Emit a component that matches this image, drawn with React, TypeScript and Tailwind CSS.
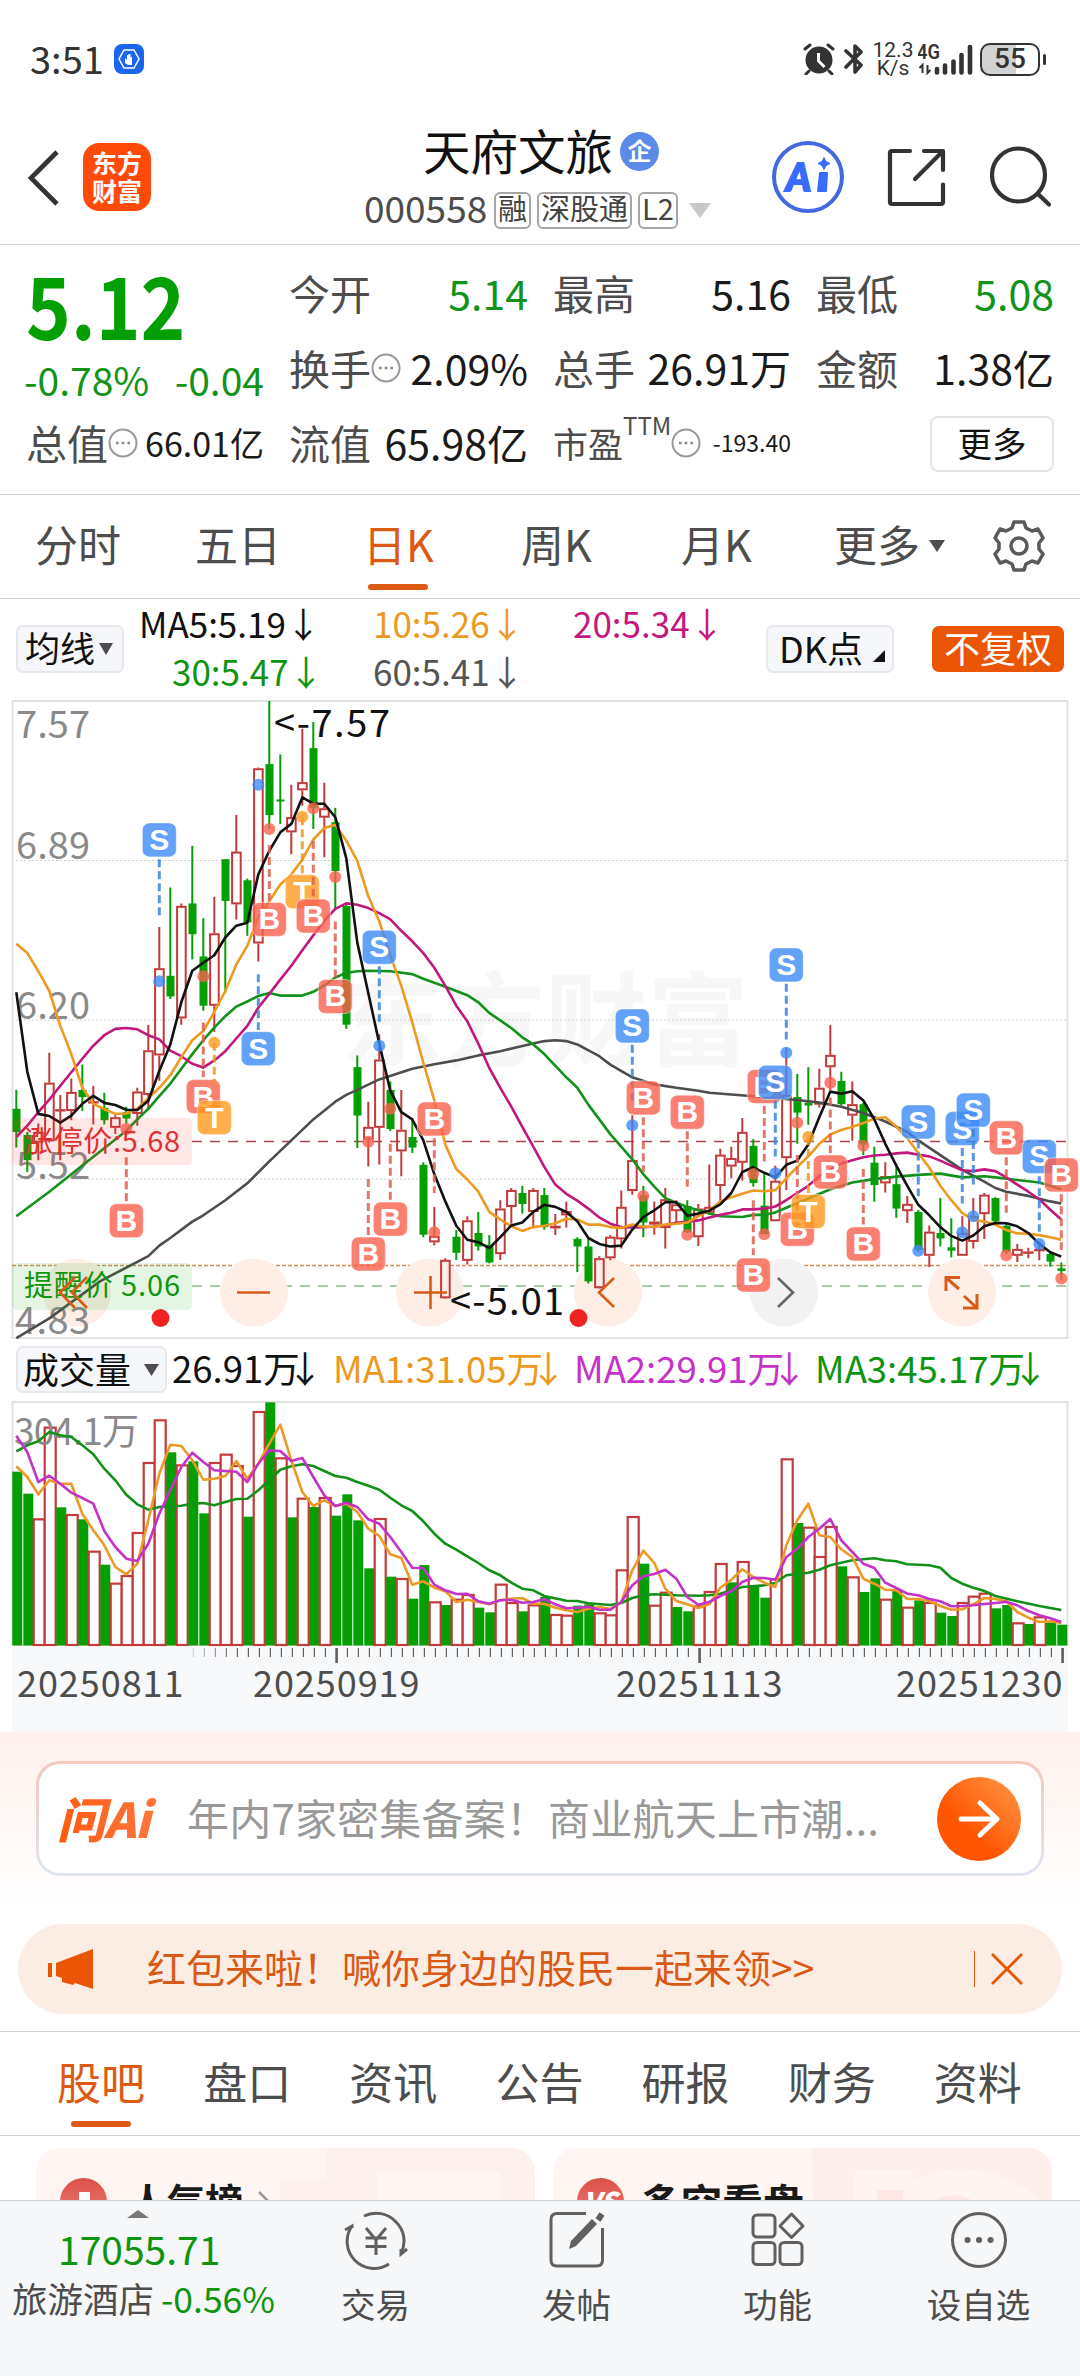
import type { ReactNode } from "react";

type Side = "S" | "B" | "T";

// Candle rows: up/down flag, high, body top, body bottom, low (chart units, top = 26)
const candles: [number, number, number, number, number][] = [
  [0, 950, 995, 1050, 1087], [0, 1050, 1057, 1117, 1145], [1, 1030, 1050, 1075, 1117], [1, 862, 933, 1072, 1075],
  [1, 962, 996, 1000, 1117], [1, 923, 955, 1000, 1022], [0, 890, 950, 967, 1000], [1, 940, 977, 979, 1032],
  [0, 957, 993, 1022, 1032], [1, 1010, 1015, 1040, 1055], [0, 990, 1003, 1018, 1030], [1, 945, 954, 1007, 1035],
  [1, 796, 856, 962, 998], [1, 563, 661, 868, 928], [0, 469, 679, 728, 734], [1, 507, 513, 780, 795],
  [0, 370, 507, 580, 640], [0, 542, 633, 750, 762], [1, 491, 578, 750, 812], [0, 402, 402, 501, 720],
  [1, 297, 384, 509, 545], [0, 448, 452, 552, 584], [1, 184, 186, 602, 645], [0, 26, 176, 297, 330],
  [0, 153, 260, 264, 318], [1, 225, 302, 338, 390], [1, 92, 219, 238, 275], [0, 76, 138, 280, 330],
  [1, 220, 281, 303, 397], [0, 280, 314, 430, 520], [0, 505, 513, 795, 805], [0, 868, 896, 1011, 1088],
  [1, 978, 1038, 1068, 1132], [1, 818, 878, 1040, 1127], [0, 930, 950, 1043, 1048], [1, 950, 1045, 1096, 1155],
  [0, 1018, 1062, 1087, 1100], [0, 1122, 1128, 1294, 1300], [1, 1228, 1297, 1312, 1320], [1, 1350, 1354, 1445, 1446],
  [0, 1283, 1299, 1337, 1354], [1, 1250, 1260, 1356, 1365], [0, 1240, 1290, 1322, 1332], [0, 1295, 1318, 1360, 1362],
  [1, 1212, 1232, 1340, 1354], [1, 1183, 1188, 1228, 1268], [0, 1178, 1195, 1221, 1244], [1, 1183, 1188, 1240, 1275],
  [0, 1183, 1200, 1276, 1282], [1, 1245, 1273, 1279, 1295], [1, 1216, 1238, 1248, 1277], [0, 1300, 1304, 1322, 1383],
  [0, 1302, 1322, 1405, 1410], [1, 1345, 1350, 1421, 1422], [1, 1295, 1299, 1350, 1355], [1, 1189, 1228, 1305, 1327],
  [1, 1010, 1117, 1190, 1199], [0, 1178, 1200, 1265, 1300], [1, 1215, 1263, 1270, 1294], [1, 1183, 1210, 1278, 1327],
  [1, 1212, 1222, 1238, 1270], [0, 1212, 1226, 1288, 1290], [1, 1221, 1232, 1300, 1321], [1, 1127, 1228, 1242, 1246],
  [1, 1090, 1104, 1178, 1220], [1, 1085, 1112, 1132, 1160], [1, 1017, 1050, 1123, 1166], [0, 1067, 1083, 1171, 1180],
  [0, 1148, 1225, 1293, 1293], [1, 1130, 1166, 1262, 1262], [1, 850, 962, 1112, 1188], [0, 912, 967, 1004, 1078],
  [0, 896, 980, 987, 1033], [1, 900, 945, 985, 992], [1, 796, 867, 896, 950], [0, 907, 929, 984, 987],
  [1, 930, 984, 1011, 1071], [0, 980, 984, 1080, 1105], [0, 1085, 1123, 1176, 1216], [1, 1122, 1155, 1172, 1194],
  [0, 1125, 1174, 1232, 1254], [1, 1202, 1221, 1238, 1266], [0, 1235, 1240, 1330, 1335], [1, 1272, 1287, 1344, 1371],
  [0, 1207, 1290, 1303, 1322], [0, 1255, 1324, 1332, 1348], [1, 1250, 1290, 1344, 1344], [1, 1207, 1250, 1311, 1327],
  [1, 1195, 1199, 1245, 1304], [0, 1205, 1207, 1262, 1266], [0, 1268, 1273, 1335, 1340], [1, 1316, 1328, 1344, 1359],
  [1, 1325, 1334, 1337, 1350], [1, 1310, 1328, 1331, 1355], [0, 1335, 1340, 1358, 1370], [0, 1360, 1374, 1380, 1402],
];

const ma5 = [
  718, 907, 1007, 1012, 1028, 1011, 983, 964, 981, 986, 997, 998, 976, 905, 842, 742, 667, 648, 630, 588, 560, 553, 438,
  382, 338, 318, 255, 270, 270, 302, 400, 600, 720, 840, 952, 1003, 1020, 1070, 1150, 1215, 1273, 1306, 1312, 1326, 1300,
  1272, 1265, 1240, 1223, 1228, 1240, 1262, 1302, 1316, 1322, 1320, 1282, 1252, 1236, 1217, 1217, 1249, 1244, 1237, 1222,
  1195, 1145, 1134, 1147, 1158, 1128, 1118, 1080, 1015, 954, 959, 953, 975, 1020, 1078, 1130, 1178, 1223, 1248, 1276,
  1297, 1308, 1296, 1274, 1266, 1267, 1274, 1290, 1316, 1336, 1346,
];
const ma10 = [
  603, 625, 668, 715, 798, 865, 945, 983, 996, 1007, 1006, 995, 970, 945, 915, 872, 832, 810, 765, 715, 652, 608, 540,
  502, 462, 438, 403, 355, 328, 320, 358, 406, 490, 550, 630, 703, 790, 885, 975, 1080, 1138, 1163, 1192, 1240, 1258,
  1274, 1285, 1276, 1273, 1267, 1256, 1258, 1270, 1270, 1276, 1278, 1270, 1275, 1275, 1270, 1268, 1265, 1250, 1237, 1215,
  1205, 1197, 1189, 1191, 1188, 1160, 1133, 1108, 1078, 1056, 1045, 1038, 1029, 1018, 1015, 1037, 1065, 1100, 1135, 1178,
  1212, 1243, 1258, 1263, 1270, 1283, 1291, 1292, 1295, 1300, 1306,
];
const ma20 = [
  1062, 1035, 1003, 973, 940, 908, 876, 845, 820, 805, 803, 806, 820, 830, 857, 870, 888, 897, 880, 858, 828, 798, 755,
  722, 688, 655, 618, 583, 548, 520, 507, 510, 518, 530, 545, 572, 597, 625, 660, 703, 750, 787, 840, 898, 945, 990, 1038,
  1085, 1133, 1175, 1197, 1213, 1232, 1253, 1268, 1276, 1277, 1276, 1275, 1271, 1266, 1263, 1260, 1253, 1247, 1242, 1234,
  1234, 1232, 1227, 1212, 1195, 1178, 1155, 1140, 1125, 1117, 1110, 1106, 1104, 1101, 1099, 1104, 1108, 1118, 1130, 1141,
  1143, 1139, 1143, 1158, 1175, 1192, 1210, 1235, 1258,
];
// Slow averages are sampled: [day, value]
const ma30: [number, number][] = [
  [0, 1250], [3, 1192], [6, 1130], [9, 1068], [10, 1047], [11, 1020], [12, 995], [13, 965], [14, 935], [15, 900],
  [16, 865], [17, 832], [18, 802], [19, 775], [20, 752], [21, 740], [22, 727], [23, 720], [24, 726], [26, 726], [27, 717],
  [28, 702], [29, 683], [30, 672], [31, 668], [32, 667], [34, 668], [36, 675], [37, 686], [39, 705], [41, 725], [42, 742],
  [43, 767], [45, 803], [46, 825], [47, 842], [48, 865], [50, 920], [51, 945], [52, 985], [53, 1020], [54, 1055],
  [56, 1115], [57, 1150], [58, 1180], [59, 1207], [60, 1218], [61, 1228], [62, 1236], [63, 1244], [64, 1250], [66, 1252],
  [67, 1247], [68, 1247], [69, 1241], [70, 1230], [72, 1208], [74, 1186], [76, 1170], [78, 1162], [80, 1156], [82, 1152],
  [84, 1149], [86, 1158], [88, 1155], [89, 1158], [91, 1164], [93, 1170], [95, 1186],
];
const ma60: [number, number][] = [
  [0, 1540], [3, 1493], [7.6, 1405], [12, 1345], [13, 1320], [14, 1302], [16, 1263], [17, 1248], [19, 1212], [21, 1172],
  [23, 1120], [25, 1070], [27, 1020], [29, 978], [30, 962], [31, 950], [33, 925], [36, 900], [38, 889], [40, 880],
  [42, 868], [44, 858], [46, 846], [48, 834], [49, 832], [50, 834], [51, 842], [53, 870], [54, 890], [56, 920], [58, 937],
  [60, 945], [62, 952], [63, 957], [65, 961], [67, 965], [69, 970], [71, 974], [73, 980], [75, 990], [77, 1005],
  [79, 1025], [81, 1050], [82, 1070], [84, 1105], [86, 1140], [88, 1168], [89, 1183], [90, 1192], [92, 1202], [94, 1215],
  [95, 1220],
];

// Trade marks: side, day, badge centre, dash start, dash end, dot
const marks: [Side, number, number, number, number, number][] = [
  ["S", 13, 356, 402, 535, 692], ["B", 10, 1261, 1110, 1215, 1043], ["B", 17, 966, 790, 920, 680],
  ["T", 18, 1016, 838, 940, 838], ["S", 22, 852, 675, 808, 225], ["T", 26, 479, 302, 435, 301],
  ["B", 23, 545, 368, 500, 330], ["B", 27, 537, 358, 490, 281], ["B", 29, 728, 550, 683, 444],
  ["B", 32, 1340, 1162, 1295, 1073], ["S", 33, 611, 656, 788, 845], ["B", 34, 1257, 1078, 1212, 995],
  ["B", 38, 1019, 1065, 1195, 1288], ["S", 56, 798, 843, 975, 1034], ["B", 57, 969, 1015, 1145, 1202],
  ["B", 61, 1003, 1048, 1180, 1294], ["B", 67, 1390, 1212, 1343, 1150], ["B", 68, 942, 988, 1120, 1293],
  ["S", 69, 932, 976, 1108, 1148], ["S", 70, 653, 698, 830, 862], ["B", 71, 1281, 1105, 1237, 1028],
  ["T", 72, 1239, 1062, 1195, 1062], ["B", 74, 1145, 968, 1100, 933], ["B", 77, 1316, 1138, 1270, 1083],
  ["S", 82, 1026, 1070, 1203, 1332], ["S", 86, 1042, 1088, 1220, 1288], ["S", 87, 998, 1043, 1175, 1250],
  ["B", 90, 1064, 1110, 1242, 1343], ["S", 93, 1108, 1155, 1287, 1316], ["B", 95, 1152, 1198, 1330, 1398],
];

// Negative = up day, drawn hollow
const volumes = [
  424, 490, -564, -289, 531, -551, 567, -661, 703, -757, -734, -605, -395, -267, 366, -402, 393, 549, -395, -370, -404,
  559, -242, 216, -381, 561, -502, 530, -500, 556, 492, 570, 714, -563, 739, -743, 805, 704, -813, 824, -805, -791, 832,
  846, -760, -815, 843, -822, 800, -851, -853, 826, 822, -846, -852, -717, -557, 700, -823, -784, 830, 843, -825, -782,
  -698, 756, -692, 765, 802, -743, -384, 578, -589, -677, -587, 708, -738, 785, 744, -805, 782, -829, 810, -815, 847, 857,
  -815, -796, -787, 834, 824, -876, 881, -858, 876, 883,
];
const vol1 = [
  408, 440, 492, 450, 460, 460, 550, 600, 645, 710, 732, 700, 570, 430, 343, 347, 390, 448, 445, 437, 392, 445, 400, 340,
  283, 390, 485, 527, 510, 527, 520, 545, 595, 617, 672, 683, 763, 753, 772, 783, 815, 808, 815, 822, 810, 805, 803, 820,
  820, 832, 840, 845, 835, 830, 836, 815, 720, 661, 698, 775, 812, 822, 833, 822, 772, 748, 717, 740, 757, 770, 645, 570,
  520, 615, 620, 657, 680, 745, 760, 778, 780, 806, 806, 812, 827, 838, 837, 822, 803, 806, 813, 845, 862, 875, 873, 878,
];
const vol2 = [
  316, 365, 455, 436, 460, 487, 503, 520, 602, 650, 685, 692, 640, 550, 480, 410, 367, 395, 420, 422, 424, 455, 400, 360,
  362, 392, 383, 440, 495, 527, 517, 530, 567, 580, 620, 665, 712, 713, 763, 780, 791, 790, 813, 820, 810, 808, 817, 815,
  807, 822, 834, 832, 829, 838, 838, 815, 765, 738, 731, 718, 745, 800, 823, 815, 797, 783, 755, 742, 743, 748, 680, 655,
  620, 595, 566, 630, 665, 700, 713, 757, 773, 790, 795, 806, 813, 828, 827, 825, 821, 818, 814, 825, 842, 855, 864, 875,
];
const vol3: [number, number][] = [
  [0, 363], [1, 345], [2, 333], [3, 305], [4, 315], [5, 320], [6, 345], [7, 372], [8, 415], [9, 450], [10, 493],
  [11, 522], [12, 538], [13, 530], [15, 526], [16, 520], [17, 518], [18, 525], [19, 515], [20, 506], [21, 505], [22, 480],
  [23, 450], [24, 418], [25, 408], [26, 402], [27, 407], [28, 422], [29, 437], [30, 442], [31, 455], [32, 466], [33, 478],
  [34, 502], [35, 525], [36, 542], [37, 573], [38, 610], [39, 640], [40, 658], [41, 678], [42, 698], [43, 720], [44, 735],
  [45, 757], [46, 775], [47, 780], [48, 797], [50, 811], [51, 812], [52, 819], [54, 824], [55, 818], [56, 803], [57, 795],
  [58, 792], [60, 795], [62, 796], [63, 795], [64, 790], [65, 780], [66, 770], [68, 765], [69, 758], [70, 735], [72, 727],
  [73, 718], [74, 705], [76, 690], [78, 684], [79, 690], [80, 693], [81, 702], [83, 705], [84, 712], [85, 743], [86, 760],
  [87, 772], [88, 782], [89, 797], [91, 813], [93, 827], [95, 839],
];

const RED = "#c23a3a";
const GREEN = "#049f04";

const dayX = (i: number) => 16.3 + i * 11;
const priceY = (v: number) => (v - 26) / 2.376 + 2;
const volY = (v: number) => (v - 215) / 3 + 1;

const line = (data: (number | [number, number])[], y: (v: number) => number) =>
  data
    .map((d, i) => (Array.isArray(d) ? `${dayX(d[0])},${y(d[1]).toFixed(1)}` : `${dayX(i)},${y(d).toFixed(1)}`))
    .join(" ");

const markFill: Record<Side, string> = { S: "#3d8bf7", B: "#f9604f", T: "#ff9a1f" };
const markLine: Record<Side, string> = { S: "#3a85de", B: "#e0604f", T: "#f0971e" };

function PriceChart() {
  return (
    <svg width="1080" height="642" viewBox="0 0 1080 642" className="block">
      <text x="341" y="359" fontSize="102" fontWeight="700" fill="#f7f7f7">
        东方财富
      </text>
      <path d="M12 161.5H1067M12 321H1067M12 480H1067" stroke="#cfcfcf" strokeDasharray="2 2" />
      <rect x="12.5" y="2" width="1055" height="637" fill="none" stroke="#e2e2e2" strokeWidth="2" />
      <path d="M192 442.5H1067" stroke="#a8434c" strokeWidth="1.6" strokeDasharray="10 8" />
      <path d="M12 566.5H1067" stroke="#d98a58" strokeWidth="1.6" strokeDasharray="4 2" />
      <path d="M192 587H1067" stroke="#86c186" strokeWidth="1.6" strokeDasharray="10 8" />
      {[77, 254, 430, 608, 784, 962].map((x, i) => (
        <circle key={x} cx={x} cy="593.5" r="34" fill={i === 4 ? "#f2f2f2" : "#feeee6"} />
      ))}

      <g fontSize="38" fill="#8a8a8a">
        <text x="16" y="39" textLength="74">7.57</text>
        <text x="16" y="160" textLength="74">6.89</text>
        <text x="16" y="320" textLength="74">6.20</text>
        <text x="16" y="480" textLength="74">5.52</text>
        <text x="15" y="635" textLength="75">4.83</text>
      </g>

      {candles.map(([up, high, top, bottom, low], i) => {
        const x = dayX(i);
        const h = (bottom - top) / 2.376;
        return up ? (
          <g key={i} stroke={RED} strokeWidth="2" fill="none">
            <path d={`M${x} ${priceY(high)}V${priceY(top)}M${x} ${priceY(bottom)}V${priceY(low)}`} />
            <rect x={x - 4.2} y={priceY(top) + 0.9} width="8.6" height={Math.max(h - 1.8, 0.4)} />
          </g>
        ) : (
          <g key={i} fill={GREEN}>
            <rect x={x - 1} y={priceY(high)} width="2" height={(low - high) / 2.376} />
            <rect x={x - 3.8} y={priceY(top)} width="8" height={Math.max(h, 2)} />
          </g>
        );
      })}

      <g fill="none" strokeWidth="2.6" strokeLinejoin="round">
        <polyline points={line(ma60, priceY)} stroke="#4d4d4d" />
        <polyline points={line(ma30, priceY)} stroke="#12921a" />
        <polyline points={line(ma20, priceY)} stroke="#c0187c" />
        <polyline points={line(ma10, priceY)} stroke="#ee991f" />
        <polyline points={line(ma5, priceY)} stroke="#111" />
      </g>

      {marks.map(([side, day, badge, from, to, dot]) => {
        const x = dayX(day);
        return (
          <g key={`${side}${day}`}>
            <path
              d={`M${x} ${priceY(from)}V${priceY(to)}`}
              stroke={markLine[side]}
              strokeWidth="3"
              strokeDasharray="8 4"
              opacity="0.85"
            />
            <circle cx={x} cy={priceY(dot)} r="6" fill={markFill[side]} opacity="0.8" />
            <rect
              x={x - 17}
              y={priceY(badge) - 17}
              width="34"
              height="34"
              rx="7"
              fill={markFill[side]}
              fillOpacity="0.8"
              stroke="#fff"
              strokeOpacity="0.5"
            />
            <text
              x={x}
              y={priceY(badge) + 10}
              textAnchor="middle"
              fontFamily="Liberation Sans, sans-serif"
              fontSize="30"
              fontWeight="700"
              fill="#fff"
            >
              {side}
            </text>
          </g>
        );
      })}

      <rect x="12" y="419" width="180" height="47" rx="5" fill="#ff3b30" fillOpacity="0.12" />
      <text x="24" y="453" fontSize="29" textLength="156" fill="#e03030">涨停价:5.68</text>
      <rect x="12" y="564" width="180" height="47" rx="5" fill="#1faa1f" fillOpacity="0.12" />
      <text x="24" y="597" fontSize="29" textLength="156" fill="#0f960f">提醒价 5.06</text>

      <g fontSize="38" fill="#111">
        <text x="274" y="38" textLength="116">&lt;-7.57</text>
        <text x="450" y="616" textLength="114">&lt;-5.01</text>
      </g>
      <circle cx="160.5" cy="619" r="9" fill="#f02222" />
      <circle cx="578.5" cy="619" r="9" fill="#f02222" />

      <g fill="none" stroke="#d95b18" strokeWidth="2.6">
        <path d="M75 578L60 593.5L75 609M87 578L72 593.5L87 609" />
        <path d="M237 593.5H270M414 593.5H447M430.5 577V610" />
        <path d="M614 579L599 593.5L614 608" />
        <path d="M778 579L793 593.5L778 608" stroke="#666" />
        <path d="M946 592V578.500H960M947 579.500L959 590M963 609H977V595M976 608L964 597" strokeWidth="3" />
      </g>
    </svg>
  );
}

function VolumeChart() {
  return (
    <svg width="1080" height="247" viewBox="0 0 1080 247" className="block">
      <rect x="12.5" y="1" width="1055" height="243" fill="none" stroke="#e2e2e2" strokeWidth="2" />
      {volumes.map((v, i) => {
        const y = volY(Math.abs(v));
        return v < 0 ? (
          <rect
            key={i}
            x={dayX(i) - 4.6}
            y={y + 1}
            width="11"
            height={243 - y}
            fill="#fff"
            stroke={RED}
            strokeWidth="2.2"
          />
        ) : (
          <rect key={i} x={dayX(i) - 4} y={y} width="10" height={244.5 - y} fill={GREEN} />
        );
      })}
      <text x="14" y="44" fontSize="37" textLength="125" fill="#8a8a8a">304.1万</text>
      <g fill="none" strokeWidth="2.6" strokeLinejoin="round">
        <polyline points={line(vol3, volY)} stroke="#12901a" />
        <polyline points={line(vol1, volY)} stroke="#ec9a25" />
        <polyline points={line(vol2, volY)} stroke="#c432c8" />
      </g>
    </svg>
  );
}

function Ticks() {
  return (
    <svg width="1056" height="16" viewBox="12 0 1056 16" className="block">
      {Array.from({ length: 80 }, (_, n) => {
        const i = n + 16;
        const major = i === 29 || i === 62 || i === 95;
        return (
          <rect
            key={i}
            x={dayX(i) + (major ? 0 : 0.5)}
            width={major ? 2.6 : 1.2}
            height={major ? 15 : 9}
            fill="#5f5f5f"
            opacity={Math.min(1, 0.25 + n * 0.18)}
          />
        );
      })}
    </svg>
  );
}

function InfoDot() {
  return (
    <svg width="30" height="30" viewBox="0 0 30 30" className="shrink-0">
      <circle cx="15" cy="15" r="13.500" fill="none" stroke="#999" strokeWidth="2" />
      <path d="M8 15h2.600M13.700 15h2.600M19.400 15h2.600" stroke="#888" strokeWidth="2.600" />
    </svg>
  );
}

function Stat({ label, value, info, color = "text-[#1a1a1a]" }: { label: string; value: string; info?: boolean; color?: string }) {
  return (
    <div className="flex h-[75px] items-center justify-between">
      <span className="flex items-center text-[41px] text-[#4d4d4d]">
        {label}
        {info ? <InfoDot /> : null}
      </span>
      <span className={`text-[41px] ${color}`}>{value}</span>
    </div>
  );
}

function Tag({ children }: { children: ReactNode }) {
  return (
    <span className="flex h-[37px] items-center rounded-[6px] border-2 border-[#a6a6a6] px-[2px] pb-1 text-[29px] text-[#444]">
      {children}
    </span>
  );
}

function StatusBar() {
  return (
    <div className="flex h-[118px] items-center pl-[30px] pr-[34px]">
      <span className="w-[84px] pb-1 text-[38px] text-[#333]">3:51</span>
      <svg width="30" height="30" viewBox="0 0 30 30">
        <rect width="30" height="30" rx="8" fill="#1a66f0" />
        <path d="M10 6h10l5 9-5 9H10l-5-9z" fill="none" stroke="#fff" strokeWidth="1.500" />
        <path d="M11 14v5l3 2h4v-8h-1.500v3-6H14.500v6-5H13v5z" fill="#fff" />
      </svg>
      <div className="ml-auto flex items-center">
        <svg width="32" height="32" viewBox="0 0 32 32" className="mr-[9px]">
          <circle cx="16" cy="17" r="13.500" fill="#333" />
          <path d="M2 6l5-4M30 6l-5-4M6 28l-3 3M26 28l3 3" stroke="#333" strokeWidth="3" strokeLinecap="round" />
          <path d="M15.500 10v8l6 6" stroke="#fff" strokeWidth="3" fill="none" />
        </svg>
        <svg width="20" height="32" viewBox="0 0 20 32" className="mr-[6px]">
          <path
            d="M2 8l15 14-6 7V3l6 6L2 24"
            fill="none"
            stroke="#333"
            strokeWidth="3.600"
            strokeLinejoin="round"
            strokeLinecap="round"
          />
        </svg>
        <div className="w-[46px] whitespace-nowrap text-center font-[Roboto,sans-serif] text-[21px] leading-[18px] text-[#333]">
          <div>12.3</div>
          <div>K/s</div>
        </div>
        <svg width="56" height="34" viewBox="0 0 56 34" className="ml-[2px]">
          <text x="-1" y="17" fontFamily="Roboto, sans-serif" fontSize="20" fontWeight="600" textLength="23" lengthAdjust="spacingAndGlyphs" fill="#333">
            4G
          </text>
          <path d="M4.500 31V23l-3 3M9.500 23v8l3-3" stroke="#333" strokeWidth="2" fill="none" />
          <path d="M19 27v3.500M27 23.500v7M35.500 19.500v11M43.500 13v17.500M52 5v25.500" stroke="#333" strokeWidth="4.600" strokeLinecap="round" />
        </svg>
        <div className="ml-[6px] flex h-[33px] w-[60px] items-center justify-center rounded-[10px] border-2 border-[#333] bg-linear-to-r from-[#d2d2d2] from-60% to-white to-60% font-[Roboto,sans-serif] text-[28px] font-medium text-[#333]">
          55
        </div>
        <div className="ml-[3px] h-[11px] w-[3px] rounded bg-[#333]" />
      </div>
    </div>
  );
}

function Header() {
  return (
    <header className="flex h-[127px] border-b border-[#d4d4d4]">
      <div className="flex w-[364px] pl-[26px] pt-[25px]">
        <svg width="36" height="70" viewBox="0 0 36 70">
          <path d="M31 9L5 35L31 61" fill="none" stroke="#333" strokeWidth="4.600" />
        </svg>
        <div className="ml-[21px] flex h-[68px] w-[68px] items-center justify-center rounded-[16px] bg-[#ff4a0a] pb-[3px] text-center text-[25px] font-bold leading-[28px] text-white">
          东方
          <br />
          财富
        </div>
      </div>
      <div className="w-[360px]">
        <div className="ml-[59px] flex h-[66px] items-center">
          <span className="pb-[3px] text-[47.500px] leading-[60px] text-[#111]">天府文旅</span>
          <span className="ml-[7px] flex h-[39px] w-[39px] items-center justify-center rounded-full bg-[#5b8be6] pb-[3px] text-[24px] font-bold text-white">
            企
          </span>
        </div>
        <div className="mt-[2px] flex h-[48px] items-center gap-[6px]">
          <span className="w-[124px] pb-1 text-[37px] text-[#4d4d4d]">000558</span>
          <Tag>融</Tag>
          <Tag>深股通</Tag>
          <Tag>L2</Tag>
          <svg width="22" height="15" viewBox="0 0 22 15" className="ml-[5px]">
            <path d="M0 0h22L11 15z" fill="#c8c8c8" />
          </svg>
        </div>
      </div>
      <svg width="310" height="80" viewBox="0 0 310 80" className="ml-[46px] mt-[19px]">
        <circle cx="38" cy="40" r="34" fill="none" stroke="#4368e0" strokeWidth="4" />
        <text x="16" y="54" fontFamily="Lato, sans-serif" fontSize="38" fontWeight="900" fontStyle="italic" fill="#3a6bff" stroke="#3a6bff" strokeWidth="2">
          A
        </text>
        <path d="M50 36h7l-1 18h-8z" fill="#3a6bff" stroke="#3a6bff" strokeWidth="2" strokeLinejoin="round" />
        <path d="M54 20.500l2 4 4 2-4 2-2 4-2-4-4-2 4-2z" fill="#3a6bff" stroke="#3a6bff" />
        <g fill="none" stroke="#333" strokeWidth="4.200" strokeLinecap="round" strokeLinejoin="round">
          <path d="M140 14H122q-2 0-2 2V65q0 2 2 2H171q2 0 2-2V47.500M154 14H173V33M172 15L145 42" />
          <circle cx="248.500" cy="38" r="26.500" />
          <path d="M268 57L279 67.500" />
        </g>
      </svg>
    </header>
  );
}

function Quote() {
  return (
    <section className="flex h-[250px] gap-x-[25px] whitespace-nowrap border-b border-[#d4d4d4] pl-[26px] pt-[10px] leading-none">
      <div className="w-[238px]">
        <div className="h-[98px] w-[180px] origin-left scale-x-[0.885] text-[86px] font-bold leading-[96px] text-[#049f04]">
          5.12
        </div>
        <div className="ml-[-2px] flex h-[52px] items-center justify-between text-[39px] text-[#12931a]">
          <span>-0.78%</span>
          <span>-0.04</span>
        </div>
        <div className="flex h-[75px] items-center justify-between">
          <span className="flex items-center text-[41px] text-[#4d4d4d]">
            总值
            <InfoDot />
          </span>
          <span className="text-[34px] text-[#1a1a1a]">66.01亿</span>
        </div>
      </div>
      <div className="w-[239px]">
        <Stat label="今开" value="5.14" color="text-[#12931a]" />
        <Stat label="换手" value="2.09%" info />
        <Stat label="流值" value="65.98亿" />
      </div>
      <div className="w-[238px]">
        <Stat label="最高" value="5.16" />
        <Stat label="总手" value="26.91万" />
        <div className="flex h-[75px] items-center text-[#4d4d4d]">
          <span className="text-[35px]">市盈</span>
          <span className="mb-[36px] text-[24px]">TTM</span>
          <InfoDot />
          <span className="ml-auto text-[23px] text-[#1a1a1a]">-193.40</span>
        </div>
      </div>
      <div className="w-[238px]">
        <Stat label="最低" value="5.08" color="text-[#12931a]" />
        <Stat label="金额" value="1.38亿" />
        <div className="ml-auto mt-[11px] flex h-[56px] w-[124px] items-center justify-center rounded-[8px] border-2 border-[#e4e4e4] pb-1 text-[34.500px] text-[#111]">
          更多
        </div>
      </div>
    </section>
  );
}

function PeriodTabs() {
  return (
    <nav className="flex h-[104px] whitespace-nowrap border-b border-[#d4d4d4] pl-[35px] text-[43px] leading-[96px] text-[#4d4d4d]">
      <span className="w-[160px]">分时</span>
      <span className="w-[168px]">五日</span>
      <span className="relative w-[158px] text-[#dd5a14]">
        日K
        <span className="absolute bottom-[8px] left-[5px] h-[6px] w-[60px] rounded bg-[#dd5a14]" />
      </span>
      <span className="w-[160px]">周K</span>
      <span className="w-[153px]">月K</span>
      <span>更多</span>
      <svg width="16" height="12" viewBox="0 0 16 12" className="ml-[9px] mt-[45px]">
        <path d="M0 0h16L8 12z" fill="#4d4d4d" />
      </svg>
      <svg width="56" height="56" viewBox="-28 -28 56 56" className="ml-[46px] mt-[23px]">
        <path
          d="M-5 -24H5L7 -18L13 -15L19 -17L24 -8L20 -3V3L24 8L19 17L13 15L7 18L5 24H-5L-7 18L-13 15L-19 17L-24 8L-20 3V-3L-24 -8L-19 -17L-13 -15L-7 -18Z"
          fill="none"
          stroke="#5a5a5a"
          strokeWidth="3.600"
          strokeLinejoin="round"
        />
        <circle r="8" fill="none" stroke="#5a5a5a" strokeWidth="3.600" />
      </svg>
    </nav>
  );
}

function Indicators() {
  return (
    <div className="flex h-[100px] whitespace-nowrap pl-[16px] text-[36px]">
      <div className="mt-[26px] flex h-[48px] w-[108px] items-center rounded-[7px] border-2 border-[#e6e8ea] bg-[#f6f7fa] pb-1 pl-[7px] text-[35px] text-[#111]">
        均线
        <svg width="14" height="12" viewBox="0 0 14 12" className="ml-[4px] mt-1">
          <path d="M0 0h14L7 12z" fill="#4d4d4d" />
        </svg>
      </div>
      <div className="ml-[15px] grid grid-cols-[234px_200px_150px] grid-rows-[48px_48px] text-[35px] leading-[48px]">
        <span className="text-[#111]">MA5:5.19↓</span>
        <span className="text-[#ec991f]">10:5.26↓</span>
        <span className="text-[#c4187e]">20:5.34↓</span>
        <span className="pl-[33px] text-[#0f940f]">30:5.47↓</span>
        <span className="text-[#555]">60:5.41↓</span>
      </div>
      <div className="ml-[43px] mt-[26px] flex h-[48px] w-[128px] items-center rounded-[7px] border-2 border-[#e6e8ea] bg-[#f6f7fa] pb-1 pl-[11px] text-[36px] text-[#111]">
        DK点
        <svg width="12" height="12" viewBox="0 0 12 12" className="ml-[10px] mt-[18px]">
          <path d="M12 0V12H0z" fill="#111" />
        </svg>
      </div>
      <div className="ml-[38px] mt-[27px] flex h-[46px] w-[132px] items-center justify-center rounded-[7px] bg-[#ea5504] pb-1 text-[36px] text-white">
        不复权
      </div>
    </div>
  );
}

function VolumeFigure({ text, className }: { text: string; className: string }) {
  return (
    <span className={className}>
      {text}
      <span className="ml-[-13px]">↓</span>
    </span>
  );
}

function VolumeHeader() {
  return (
    <div className="flex h-[60px] whitespace-nowrap pl-[16px] pt-[5px] text-[36.500px] leading-[44px]">
      <div className="flex h-[47px] w-[151px] items-center rounded-[7px] border-2 border-[#e6e8ea] bg-[#f6f7fa] pb-1 pl-[5px] text-[36px] text-[#111]">
        成交量
        <svg width="15" height="12" viewBox="0 0 15 12" className="ml-[13px] mt-1">
          <path d="M0 0h15L7.500 12z" fill="#4d4d4d" />
        </svg>
      </div>
      <VolumeFigure text="26.91万" className="ml-[5px] w-[161px] text-[#111]" />
      <VolumeFigure text="MA1:31.05万" className="w-[241px] text-[#ec991f]" />
      <VolumeFigure text="MA2:29.91万" className="w-[241px] text-[#c432c8]" />
      <VolumeFigure text="MA3:45.17万" className="text-[#0f940f]" />
    </div>
  );
}

function AskBar() {
  return (
    <div className="h-[178px] bg-linear-to-b from-[#fff1ec] to-white px-[36px] pt-[29px]">
      <div className="rounded-[24px] bg-linear-to-b from-[#f5c8be] to-[#dfe5f2] p-[3px]">
        <div className="flex h-[109px] items-center rounded-[21px] bg-white pl-[18px] pr-[20px]">
          <span className="w-[130px] bg-linear-to-r from-[#ff5a08] to-[#ff7d45] bg-clip-text pb-1 text-[48px] font-black italic tracking-[-1px] text-transparent">
            问Ai
          </span>
          <span className="whitespace-nowrap pb-[4px] text-[42px] tracking-[0.200px] text-[#999]">年内7家密集备案！商业航天上市潮...</span>
          <svg width="84" height="84" viewBox="0 0 84 84" className="ml-auto shrink-0">
            <defs>
              <linearGradient id="go" x1="0.2" y1="0.8" x2="1" y2="0">
                <stop offset="0.2" stopColor="#ff5500" />
                <stop offset="1" stopColor="#ff9a4a" />
              </linearGradient>
            </defs>
            <circle cx="42" cy="42" r="42" fill="url(#go)" />
            <path d="M24 42H60M43 26L60 42L43 58" fill="none" stroke="#fff" strokeWidth="5" strokeLinecap="round" strokeLinejoin="round" />
          </svg>
        </div>
      </div>
    </div>
  );
}

function Notice() {
  return (
    <div className="mx-[18px] mt-[14px] flex h-[90px] items-center rounded-full bg-[#fcede4] pl-[30px] pr-[38px] text-[#d95a16]">
      <svg width="46" height="40" viewBox="0 0 46 40">
        <path d="M0 14h4v14H0zM8 14L45 0V40L27 34L25 36L14 33V29L8 27z" fill="#ea5504" />
      </svg>
      <span className="ml-[53px] whitespace-nowrap pb-[5px] text-[39px]">红包来啦！喊你身边的股民一起来领&gt;&gt;</span>
      <span className="ml-auto h-[36px] w-px bg-[#d95a16]" />
      <svg width="34" height="34" viewBox="0 0 34 34" className="ml-[15px]">
        <path d="M2 2L32 32M32 2L2 32" stroke="#ea5504" strokeWidth="2.800" />
      </svg>
    </div>
  );
}

function SectionTabs() {
  return (
    <nav className="mt-[17px] flex h-[105px] border-y border-[#d4d4d4] pl-[57px] text-[44px] leading-[98px] text-[#4d4d4d]">
      {["股吧", "盘口", "资讯", "公告", "研报", "财务", "资料"].map((name, i) => (
        <span key={name} className={`relative w-[146.500px] ${i === 0 ? "text-[#dd5a14]" : ""}`}>
          {name}
          {i === 0 ? <span className="absolute bottom-[8px] left-[14px] h-[6px] w-[60px] rounded bg-[#dd5a14]" /> : null}
        </span>
      ))}
    </nav>
  );
}

function Cards() {
  return (
    <div className="flex h-[64px] gap-[18px] overflow-hidden pl-[36px] pt-[12px]">
      <div className="relative flex h-[106px] w-[499px] shrink-0 overflow-hidden rounded-[24px] bg-[#fff6f4] pl-[24px] pt-[30px]">
        <svg width="499" height="106" viewBox="0 0 499 106" className="absolute left-0 top-0">
          <path d="M290 0H499V106H244V31H290z" fill="#fef0ed" />
          <path d="M341 24H464V106H341z" fill="#fff6f4" />
        </svg>
        <span className="relative flex h-[47px] w-[47px] items-center justify-center rounded-full bg-linear-to-b from-[#db5048] to-[#f08078]">
          <svg width="26" height="26" viewBox="0 0 26 26">
            <path d="M0 26V16H8V3H19V26z" fill="#fff" />
          </svg>
        </span>
        <span className="relative ml-[22px] text-[38px] font-bold leading-[44px] text-[#1a1a1a]">人气榜</span>
        <svg width="16" height="28" viewBox="0 0 16 28" className="relative ml-[14px] mt-[12px]">
          <path d="M2 2L14 14L2 26" fill="none" stroke="#999" strokeWidth="2.500" />
        </svg>
      </div>
      <div className="relative flex h-[106px] w-[499px] shrink-0 overflow-hidden rounded-[24px] bg-[#fff6f4] pl-[24px] pt-[30px]">
        <svg width="499" height="106" viewBox="0 0 499 106" className="absolute left-0 top-0">
          <path d="M258 0H499V106H262z" fill="#feefec" />
          <path d="M302 22H360V32Q395 16 430 24Q470 30 490 58V106H302z" fill="#fff4f2" />
          <path d="M324 42H350V106H324zM372 60Q400 34 430 60V106H372z" fill="#fee7e4" />
        </svg>
        <span className="relative flex h-[47px] w-[47px] items-center justify-center rounded-full bg-linear-to-b from-[#db5048] to-[#f08078] text-[27px] font-black italic text-white">
          VS
        </span>
        <span className="relative ml-[16px] text-[41px] font-bold leading-[46px] text-[#1a1a1a]">多空看盘</span>
      </div>
    </div>
  );
}

function NavItem({ label, children }: { label: string; children: ReactNode }) {
  return (
    <div className="flex w-[201px] flex-col items-center">
      <svg width="64" height="60" viewBox="-32 -30 64 60" className="mt-[9px]" fill="none" stroke="#606060" strokeWidth="3">
        {children}
      </svg>
      <span className="mt-[8px] text-[34.500px] leading-[50px] text-[#4d4d4d]">{label}</span>
    </div>
  );
}

function BottomBar() {
  return (
    <footer className="flex h-[176px] border-t border-[#d0d2d4] bg-[#f6f7f9]">
      <div className="flex w-[275px] flex-col pl-[12px]">
        <svg width="22" height="8" viewBox="0 0 22 8" className="ml-[115px] mt-[9px]">
          <path d="M0 8L11 0L22 8z" fill="#777" />
        </svg>
        <span className="ml-[46px] mt-[5px] text-[39px] leading-[50px] text-[#0f940f]">17055.71</span>
        <span className="flex justify-between whitespace-nowrap text-[35.500px] leading-[50px] text-[#4d4d4d]">
          旅游酒店<span className="text-[#0f940f]">-0.56%</span>
        </span>
      </div>
      <NavItem label="交易">
        <path d="M-12 -24A27 27 0 0 1 20 -18A26 26 0 0 1 25 13M-24 -14A27 27 0 0 0 13 24M-31 -10L-24 -14V-12M31 9L25 14V9" />
        <path d="M-10 -12L0 0L10 -12M-10.500 -2H10.500M-10.500 6.500H10.500M0 -1V15" />
      </NavItem>
      <NavItem label="发帖">
        <path d="M9 -26.500H-20Q-26 -26.500 -26 -20.500V20Q-26 26 -20 26H19.500Q25.500 26 25.500 20V-12" />
        <path d="M21 -20L25 -26" strokeWidth="6" />
        <path d="M-8 9L-6 1L15 -21L20 -16L-1 6z" fill="#606060" stroke="none" />
      </NavItem>
      <NavItem label="功能">
        <rect x="-25" y="-25" width="22" height="22" rx="4" />
        <rect x="-25" y="2.500" width="22" height="22" rx="4" />
        <rect x="2" y="2.500" width="22" height="22" rx="4" />
        <path d="M13.500 -26L25 -14L13.500 -2.500L2 -14z" strokeLinejoin="round" />
      </NavItem>
      <NavItem label="设自选">
        <circle r="26.500" />
        <path d="M-11.500 0h.1M0 0h.1M11.500 0h.1" strokeWidth="6" strokeLinecap="round" />
      </NavItem>
    </footer>
  );
}

export default function App() {
  return (
    <div className="h-[2376px] w-[1080px] overflow-hidden bg-white font-['Noto_Sans_CJK_SC',sans-serif]">
      <StatusBar />
      <Header />
      <Quote />
      <PeriodTabs />
      <Indicators />
      <PriceChart />
      <VolumeHeader />
      <VolumeChart />
      <div className="mx-[12px] h-[84px] bg-[#f7f8fa]">
        <Ticks />
        <div className="flex h-[34px] items-center pl-[5px] text-[36px] tracking-[0.950px] text-[#4d4d4d]">
          <span className="w-[236px]">20250811</span>
          <span className="w-[363px]">20250919</span>
          <span className="w-[280px]">20251113</span>
          <span>20251230</span>
        </div>
      </div>
      <AskBar />
      <Notice />
      <SectionTabs />
      <Cards />
      <BottomBar />
    </div>
  );
}
